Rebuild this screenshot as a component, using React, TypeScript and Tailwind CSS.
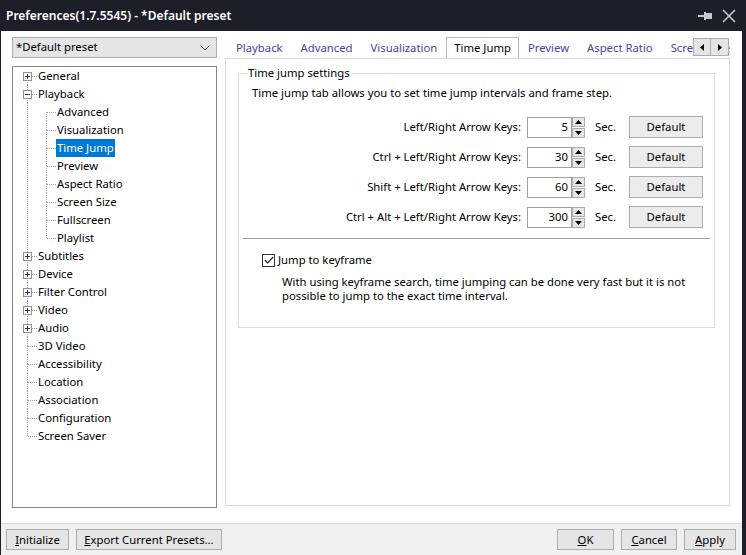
import React from "react";

type Node = {
  label: string;
  level: number;
  box?: "plus" | "minus";
  first?: boolean;
  last?: boolean;
  selected?: boolean;
};

const tree: Node[] = [
  { label: "General", level: 0, box: "plus", first: true },
  { label: "Playback", level: 0, box: "minus" },
  { label: "Advanced", level: 1, first: true },
  { label: "Visualization", level: 1 },
  { label: "Time Jump", level: 1, selected: true },
  { label: "Preview", level: 1 },
  { label: "Aspect Ratio", level: 1 },
  { label: "Screen Size", level: 1 },
  { label: "Fullscreen", level: 1 },
  { label: "Playlist", level: 1, last: true },
  { label: "Subtitles", level: 0, box: "plus" },
  { label: "Device", level: 0, box: "plus" },
  { label: "Filter Control", level: 0, box: "plus" },
  { label: "Video", level: 0, box: "plus" },
  { label: "Audio", level: 0, box: "plus" },
  { label: "3D Video", level: 0 },
  { label: "Accessibility", level: 0 },
  { label: "Location", level: 0 },
  { label: "Association", level: 0 },
  { label: "Configuration", level: 0 },
  { label: "Screen Saver", level: 0, last: true },
];

const dot = "#a0a0a0";

function Gutter({ node }: { node: Node }) {
  return (
    <svg width="19" height="18" className="shrink-0">
      {!node.first && <line x1="9.5" y1="0" x2="9.5" y2="9" stroke={dot} strokeDasharray="1 1" />}
      {!node.last && <line x1="9.5" y1="9" x2="9.5" y2="18" stroke={dot} strokeDasharray="1 1" />}
      <line x1="10" y1="9.5" x2="19" y2="9.5" stroke={dot} strokeDasharray="1 1" />
      {node.box && (
        <g>
          <rect x="5.5" y="5.5" width="8" height="8" fill="#fff" stroke="#919191" />
          <line x1="7" y1="9.5" x2="12" y2="9.5" stroke="#1e3287" />
          {node.box === "plus" && <line x1="9.5" y1="7" x2="9.5" y2="12" stroke="#1e3287" />}
        </g>
      )}
    </svg>
  );
}

function ContinueLine() {
  return (
    <svg width="19" height="18" className="shrink-0">
      <line x1="9.5" y1="0" x2="9.5" y2="18" stroke={dot} strokeDasharray="1 1" />
    </svg>
  );
}

function TreeRow({ node }: { node: Node }) {
  return (
    <div className="flex h-[18px] items-center whitespace-nowrap">
      {node.level === 1 && <ContinueLine />}
      <Gutter node={node} />
      <span
        className={
          node.selected
            ? "bg-[#0078d7] px-[1px] leading-[18px] text-white"
            : "px-[1px] leading-[18px]"
        }
      >
        {node.label}
      </span>
    </div>
  );
}

function Spin() {
  return (
    <div className="flex w-[13px] flex-col gap-[1px]">
      <div className="flex h-[10px] items-center justify-center border border-[#acacac] bg-[#e6e6e6]">
        <svg width="7" height="4">
          <path d="M0 4 L3.5 0 L7 4 Z" fill="#000" />
        </svg>
      </div>
      <div className="flex h-[10px] items-center justify-center border border-[#acacac] bg-[#e6e6e6]">
        <svg width="7" height="4">
          <path d="M0 0 L3.5 4 L7 0 Z" fill="#000" />
        </svg>
      </div>
    </div>
  );
}

function JumpRow({ label, value }: { label: string; value: string }) {
  return (
    <div className="flex h-[22px] items-center whitespace-nowrap">
      <span className="flex-1 text-right">{label}</span>
      <div className="ml-[6px] flex h-[21px] w-[45px] items-center justify-end border border-[#a0a0a0] bg-white pr-[3px]">
        {value}
      </div>
      <Spin />
      <span className="ml-[10px] w-[34px]">Sec.</span>
      <button className="h-[22px] w-[74px] border border-[#adadad] bg-[#ececec]">Default</button>
    </div>
  );
}

function Btn({ w, children }: { w: string; children: React.ReactNode }) {
  return (
    <button className={`h-[21px] ${w} whitespace-nowrap border border-[#adadad] bg-[#e5e5e5] leading-[19px]`}>
      {children}
    </button>
  );
}

const tabs = ["Playback", "Advanced", "Visualization", "Time Jump", "Preview", "Aspect Ratio", "Screen Size"];

export default function App() {
  return (
    <div className="flex h-[555px] w-[746px] flex-col overflow-hidden bg-[#1e1e28] font-['Noto_Sans',sans-serif] text-[11.3px] text-black">
      {/* title bar */}
      <div className="flex h-[31px] shrink-0 items-center pl-[6px] pr-[10px] text-white">
        <span className="flex-1 text-[12px] font-semibold">Preferences(1.7.5545) - *Default preset</span>
        <svg width="14" height="10" className="mr-[10px]" viewBox="0 0 14 10">
          <rect x="0" y="4" width="6" height="2" fill="#c8c8c8" />
          <rect x="6" y="1" width="2" height="8" fill="#c8c8c8" />
          <rect x="8" y="2" width="6" height="6" fill="#c8c8c8" />
        </svg>
        <svg width="14" height="14" viewBox="0 0 14 14">
          <path d="M1 1 L13 13 M13 1 L1 13" stroke="#c8c8c8" strokeWidth="1.6" />
        </svg>
      </div>

      <div className="ml-[1px] mr-[4px] flex flex-1 flex-col bg-white">
        <div className="flex h-[492px] shrink-0 pt-[6px]">
          {/* left column */}
          <div className="ml-[11px] flex w-[205px] flex-col">
            <div className="flex h-[21px] items-center border border-[#acacac] bg-[#e5e5e5] pl-[3px] pr-[6px]">
              <span className="flex-1">*Default preset</span>
              <svg width="10" height="6" viewBox="0 0 10 6">
                <path d="M0.5 0.5 L5 5 L9.5 0.5" stroke="#555" fill="none" />
              </svg>
            </div>
            <div className="mt-[8px] h-[442px] border border-[#828790] bg-white pl-[5px]">
              {tree.map((n) => (
                <TreeRow key={n.label} node={n} />
              ))}
            </div>
          </div>

          {/* right column */}
          <div className="ml-[8px] flex w-[505px] flex-col">
            <div className="relative flex h-[21px] items-end overflow-hidden">
              <div className="flex items-end whitespace-nowrap pl-[2px]">
                {tabs.map((t) =>
                  t === "Time Jump" ? (
                    <div
                      key={t}
                      className="relative z-10 -mb-[1px] flex h-[22px] shrink-0 items-center border border-b-0 border-[#a9b9d9] bg-white px-[7px] text-black"
                    >
                      {t}
                    </div>
                  ) : (
                    <div key={t} className="flex h-[20px] shrink-0 items-center px-[9px] text-[#4545a0]">
                      {t}
                    </div>
                  )
                )}
              </div>
              <div className="absolute right-[1px] top-[1px] flex h-[18px] border border-[#acacac] bg-[#e5e5e5]">
                <div className="flex w-[17px] items-center justify-center border-r border-[#acacac]">
                  <svg width="4" height="7">
                    <path d="M4 0 L0 3.5 L4 7 Z" fill="#000" />
                  </svg>
                </div>
                <div className="flex w-[17px] items-center justify-center">
                  <svg width="4" height="7">
                    <path d="M0 0 L4 3.5 L0 7 Z" fill="#000" />
                  </svg>
                </div>
              </div>
            </div>
            <div className="h-[448px] border border-[#dadada] bg-white pl-[12px] pr-[14px] pt-[6px]">
              <fieldset className="border border-[#dcdcdc] px-0 pb-[24px]">
                <legend className="ml-[8px] px-[1px] leading-[16px]">Time jump settings</legend>
                <p className="ml-[13px] mt-[4px] whitespace-nowrap leading-[16px]">
                  Time jump tab allows you to set time jump intervals and frame step.
                </p>
                <div className="mt-[15px] flex flex-col gap-[8px] pr-[11px]">
                  <JumpRow label="Left/Right Arrow Keys:" value="5" />
                  <JumpRow label="Ctrl + Left/Right Arrow Keys:" value="30" />
                  <JumpRow label="Shift + Left/Right Arrow Keys:" value="60" />
                  <JumpRow label="Ctrl + Alt + Left/Right Arrow Keys:" value="300" />
                </div>
                <div className="mx-[4px] mt-[10px] h-[1px] bg-[#a0a0a0]" />
                <div className="ml-[23px] mt-[13px] flex h-[16px] items-center">
                  <div className="flex h-[13px] w-[13px] items-center justify-center border border-[#333] bg-white">
                    <svg width="10" height="8" viewBox="0 0 10 8">
                      <path d="M0.8 4 L3.6 6.8 L9.2 1" stroke="#222" strokeWidth="1.2" fill="none" />
                    </svg>
                  </div>
                  <span className="ml-[3px]">Jump to keyframe</span>
                </div>
                <p className="ml-[43px] mt-[7px] whitespace-nowrap leading-[14px]">
                  With using keyframe search, time jumping can be done very fast but it is not
                  <br />
                  possible to jump to the exact time interval.
                </p>
              </fieldset>
            </div>
          </div>
        </div>

        {/* bottom bar */}
        <div className="flex flex-1 items-center gap-[7px] border-t border-[#dcdcdc] bg-[#f0f0f0] pl-[5px] pr-[6px]">
          <Btn w="w-[63px]">
            <u>I</u>nitialize
          </Btn>
          <Btn w="w-[146px]">
            <u>E</u>xport Current Presets...
          </Btn>
          <div className="flex-1" />
          <Btn w="w-[57px]">
            <u>O</u>K
          </Btn>
          <Btn w="w-[56px]">
            <u>C</u>ancel
          </Btn>
          <Btn w="w-[52px]">
            <u>A</u>pply
          </Btn>
        </div>
      </div>
    </div>
  );
}
